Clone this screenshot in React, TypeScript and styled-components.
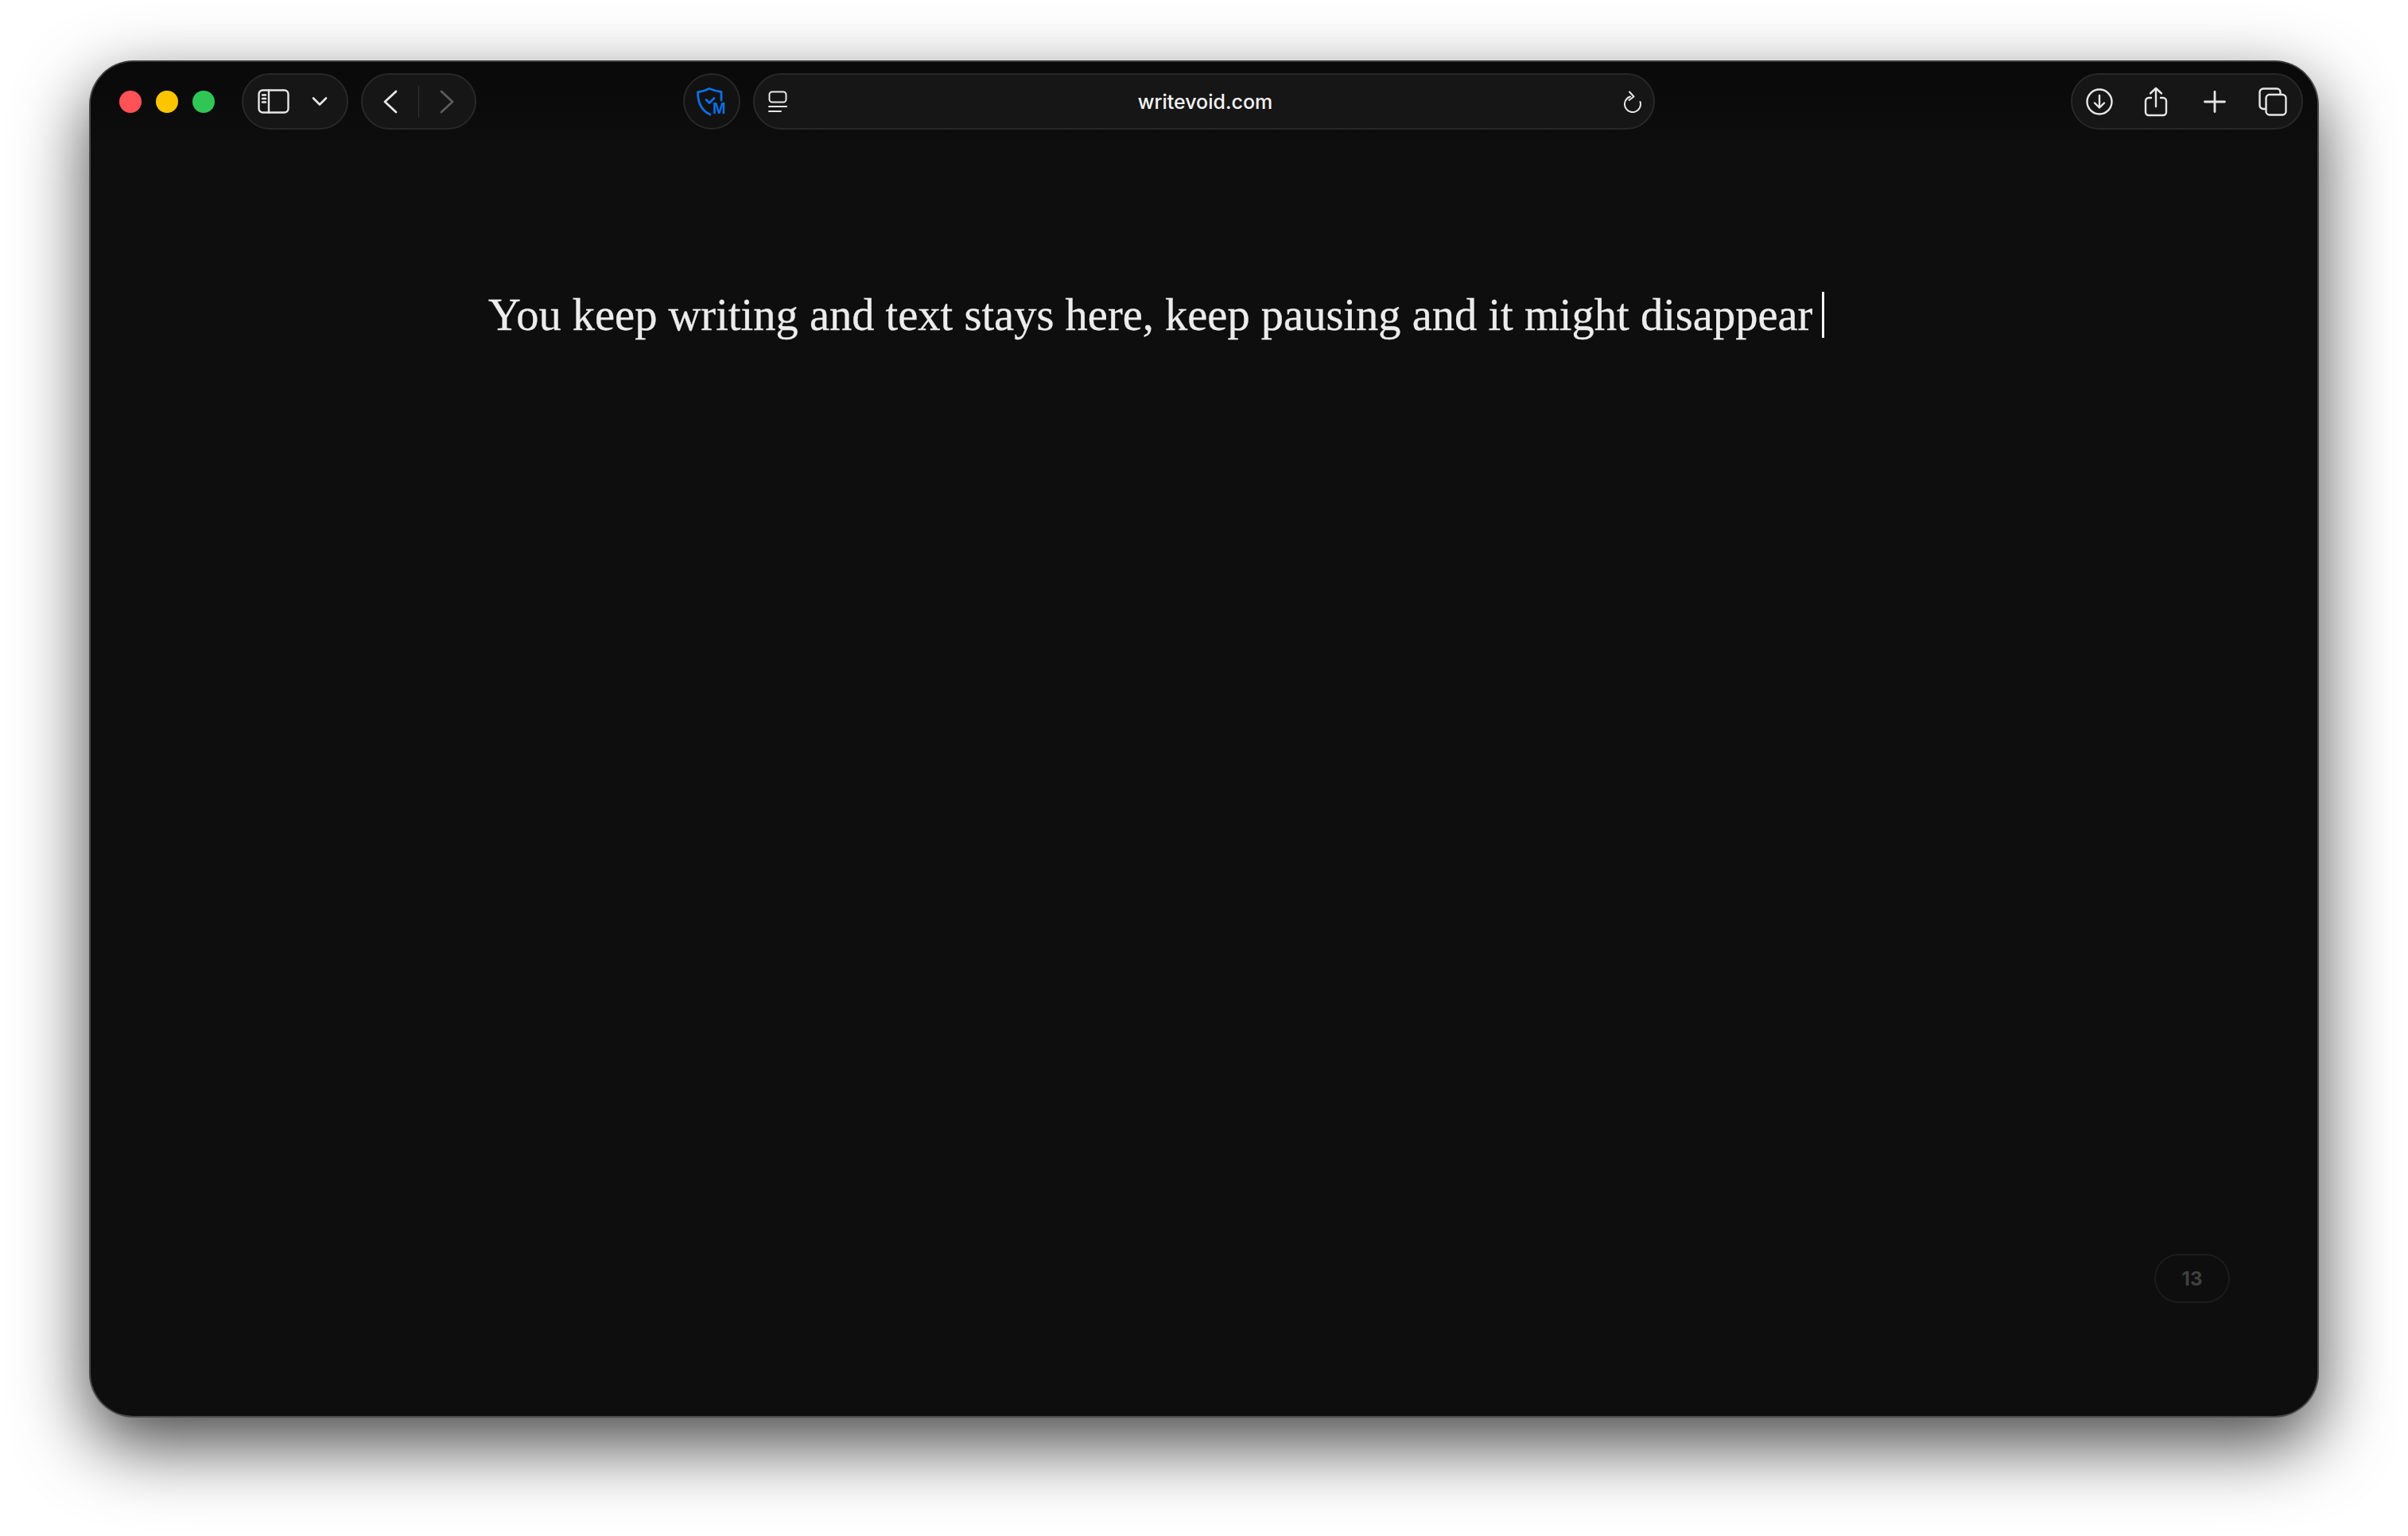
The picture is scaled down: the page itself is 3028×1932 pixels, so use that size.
import styled, { createGlobalStyle } from 'styled-components';

const GlobalStyle = createGlobalStyle`
    html, body {
        margin: 0;
        padding: 0;
        background: #ffffff;
    }
`;

const Page = styled.div`
    width: 3028px;
    height: 1932px;
    padding: 76px 0 0 112px;
    box-sizing: border-box;
    overflow: hidden;
`;

const BrowserWindow = styled.div`
    width: 2804px;
    height: 1707px;
    box-sizing: border-box;
    display: flex;
    flex-direction: column;
    background: #0e0e0e;
    border: 2px solid #4a4a4a;
    border-top-color: #3a3a3a;
    border-radius: 56px;
    box-shadow: 0 34px 90px rgba(0, 0, 0, 0.72);
    overflow: hidden;
`;

const Toolbar = styled.div`
    display: flex;
    align-items: center;
    flex-shrink: 0;
    padding: 14px 18px 16px 36px;
    background: linear-gradient(#090909, #0d0d0d);
`;

const Lights = styled.div`
    display: flex;
    gap: 18px;
    margin-right: 34px;
`;

const Light = styled.span<{ $color: string }>`
    width: 28px;
    height: 28px;
    border-radius: 50%;
    background: ${p => p.$color};
`;

const Pill = styled.div<{ $ml?: number; $pr?: number }>`
    display: flex;
    align-items: center;
    height: 71px;
    box-sizing: border-box;
    margin-left: ${p => p.$ml ?? 0}px;
    padding-right: ${p => p.$pr ?? 0}px;
    background: #161616;
    border: 2px solid #282828;
    border-radius: 36px;
`;

const RightPill = styled(Pill)`
    margin-left: auto;
`;

const Slot = styled.span<{ $w: number }>`
    display: flex;
    align-items: center;
    justify-content: center;
    width: ${p => p.$w}px;
    height: 100%;
`;

const Divider = styled.span`
    width: 1px;
    height: 40px;
    background: #333333;
`;

const ShieldButton = styled.div`
    display: flex;
    align-items: center;
    justify-content: center;
    width: 72px;
    height: 71px;
    box-sizing: border-box;
    margin-left: 260px;
    background: #121212;
    border: 2px solid #282828;
    border-radius: 50%;
`;

const AddressBar = styled(Pill)`
    width: 1134px;
    padding: 0 14px 0 17px;
    justify-content: space-between;
`;

const Url = styled.span`
    color: #f4f4f4;
    font-family: "Inter", "Liberation Sans", sans-serif;
    font-size: 25px;
    font-weight: 500;
`;

const Editor = styled.div`
    flex: 1;
    display: flex;
    flex-direction: column;
    justify-content: space-between;
    padding: 185px 0 0 500px;
`;

const Line = styled.div`
    display: flex;
    align-items: center;
    color: #ececec;
    font-family: "Liberation Serif", "Times New Roman", serif;
    font-size: 56.5px;
    line-height: 64px;
    white-space: pre;
    -webkit-text-stroke: 0.3px #ececec;
`;

const Caret = styled.span`
    width: 3px;
    height: 58px;
    margin-left: 12px;
    background: #f4f4f4;
`;

const Counter = styled.div`
    align-self: flex-end;
    display: flex;
    align-items: center;
    justify-content: center;
    width: 95px;
    height: 62px;
    box-sizing: border-box;
    margin: 0 110px 142px 0;
    border: 2px solid #1c1c1c;
    border-radius: 31px;
    color: #404040;
    font-family: "Inter", "Liberation Sans", sans-serif;
    font-size: 24px;
    font-weight: 700;
`;

const line = {
    fill: 'none',
    stroke: '#e6e6e6',
    strokeWidth: 2.4,
    strokeLinecap: 'round' as const,
    strokeLinejoin: 'round' as const,
};

const SidebarIcon = () => (
    <svg width="40" height="31" viewBox="0 0 40 31" {...line}>
        <rect x="1.5" y="1.5" width="37" height="28" rx="5" />
        <path d="M14 1.5v28M6 7.5h4M6 12h4M6 16.5h4" />
    </svg>
);

const ChevronDown = () => (
    <svg width="20" height="13" viewBox="0 0 20 13" {...line} strokeWidth={2.6}>
        <path d="M2 2.5l8 8 8-8" />
    </svg>
);

const ChevronBack = () => (
    <svg width="18" height="30" viewBox="0 0 18 30" {...line} strokeWidth={2.8}>
        <path d="M16 2L2 15l14 13" />
    </svg>
);

const ChevronForward = () => (
    <svg width="18" height="30" viewBox="0 0 18 30" {...line} stroke="#5c5c5c" strokeWidth={2.8}>
        <path d="M2 2l14 13L2 28" />
    </svg>
);

const ShieldIcon = () => (
    <svg width="38" height="36" viewBox="0 0 38 36" fill="none" stroke="#0b6fe6" strokeWidth="2.8" strokeLinecap="round" strokeLinejoin="round">
        <path d="M1.5 6C7 5 12 3.500 16 1.500C21 3.500 26 5 31 5.500V16M1.500 6C1.500 19 6 29 17 34" />
        <path d="M12 15.500l4 4 6-6" />
        <text x="20" y="33" fill="#0b6fe6" stroke="none" fontFamily="Liberation Sans" fontWeight="700" fontSize="20">M</text>
    </svg>
);

const ReaderIcon = () => (
    <svg width="24" height="28" viewBox="0 0 24 28" {...line} strokeWidth={2}>
        <rect x="1.500" y="1.500" width="21" height="13" rx="3.500" />
        <path d="M1 20h22M1 26h15" />
    </svg>
);

const ReloadIcon = () => (
    <svg width="24" height="28" viewBox="0 0 24 28" {...line} strokeWidth={2}>
        <path d="M9 7.500A10 10 0 1 0 21.500 14M8 1.500l5.500 6-6 4.500" />
    </svg>
);

const DownloadIcon = () => (
    <svg width="34" height="34" viewBox="0 0 34 34" {...line}>
        <circle cx="17" cy="17" r="15.500" />
        <path d="M17 9v15M11 18.500l6 6 6-6" />
    </svg>
);

const ShareIcon = () => (
    <svg width="30" height="38" viewBox="0 0 30 38" {...line}>
        <path d="M9 14H6a4 4 0 0 0-4 4v14a4 4 0 0 0 4 4h18a4 4 0 0 0 4-4V18a4 4 0 0 0-4-4h-3" />
        <path d="M15 25V2M8 8.500L15 2l7 6.500" />
    </svg>
);

const PlusIcon = () => (
    <svg width="28" height="28" viewBox="0 0 28 28" {...line} strokeWidth={2.8}>
        <path d="M14 1.500v25M1.500 14h25" />
    </svg>
);

const TabsIcon = () => (
    <svg width="36" height="36" viewBox="0 0 36 36" {...line}>
        <path d="M8 27H6a4.500 4.500 0 0 1-4.500-4.500V6A4.500 4.500 0 0 1 6 1.500h17A4.500 4.500 0 0 1 27.500 6v2" />
        <rect x="9.500" y="9" width="25" height="25.500" rx="4.500" />
    </svg>
);

const App = () => {
    return (
        <>
            <GlobalStyle />
            <Page>
                <BrowserWindow>
                    <Toolbar>
                        <Lights>
                            <Light $color="#ff5257" />
                            <Light $color="#fdc500" />
                            <Light $color="#30c655" />
                        </Lights>
                        <Pill $pr={14}>
                            <Slot $w={76}><SidebarIcon /></Slot>
                            <Slot $w={40}><ChevronDown /></Slot>
                        </Pill>
                        <Pill $ml={16}>
                            <Slot $w={70}><ChevronBack /></Slot>
                            <Divider />
                            <Slot $w={70}><ChevronForward /></Slot>
                        </Pill>
                        <ShieldButton><ShieldIcon /></ShieldButton>
                        <AddressBar $ml={16}>
                            <ReaderIcon />
                            <Url>writevoid.com</Url>
                            <ReloadIcon />
                        </AddressBar>
                        <RightPill>
                            <Slot $w={68}><DownloadIcon /></Slot>
                            <Slot $w={74}><ShareIcon /></Slot>
                            <Slot $w={74}><PlusIcon /></Slot>
                            <Slot $w={72}><TabsIcon /></Slot>
                        </RightPill>
                    </Toolbar>
                    <Editor>
                        <Line>
                            You keep writing and text stays here, keep pausing and it might disappear
                            <Caret />
                        </Line>
                        <Counter>13</Counter>
                    </Editor>
                </BrowserWindow>
            </Page>
        </>
    );
};

export default App;
